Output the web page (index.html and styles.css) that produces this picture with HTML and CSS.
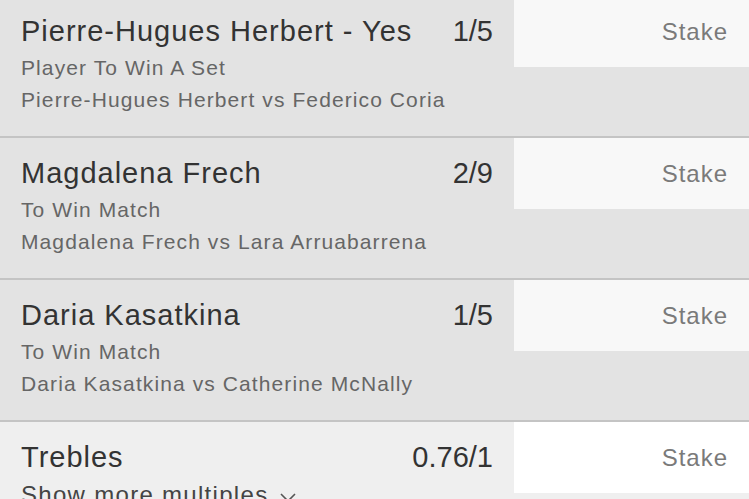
FILE: index.html
```html
<!DOCTYPE html>
<html lang="en">
<head>
  <meta charset="UTF-8">
  <meta name="viewport" content="width=device-width, initial-scale=1.0">
  <title>Bet Slip</title>
  <link rel="stylesheet" href="styles.css">
</head>
<body>
  <div class="slip">
    <div class="bet">
      <div class="bet-info">
        <div class="bet-head">
          <span class="bet-name">Pierre-Hugues Herbert - Yes</span>
          <span class="bet-odds">1/5</span>
        </div>
        <div class="bet-market">Player To Win A Set</div>
        <div class="bet-event">Pierre-Hugues Herbert vs Federico Coria</div>
      </div>
      <div class="stake">Stake</div>
    </div>

    <div class="bet">
      <div class="bet-info">
        <div class="bet-head">
          <span class="bet-name">Magdalena Frech</span>
          <span class="bet-odds">2/9</span>
        </div>
        <div class="bet-market">To Win Match</div>
        <div class="bet-event">Magdalena Frech vs Lara Arruabarrena</div>
      </div>
      <div class="stake">Stake</div>
    </div>

    <div class="bet">
      <div class="bet-info">
        <div class="bet-head">
          <span class="bet-name">Daria Kasatkina</span>
          <span class="bet-odds">1/5</span>
        </div>
        <div class="bet-market">To Win Match</div>
        <div class="bet-event">Daria Kasatkina vs Catherine McNally</div>
      </div>
      <div class="stake">Stake</div>
    </div>

    <div class="bet multiple">
      <div class="bet-info">
        <div class="bet-head">
          <span class="bet-name">Trebles</span>
          <span class="bet-odds">0.76/1</span>
        </div>
        <div class="more">
          Show more multiples
          <svg class="chevron" width="20" height="12" viewBox="0 0 20 12">
            <path d="M3 3 L10 10 L17 3" fill="none" stroke="#555" stroke-width="1.6"/>
          </svg>
        </div>
      </div>
      <div class="stake">Stake</div>
    </div>
  </div>
</body>
</html>
```

FILE: styles.css
```css
body {
  margin: 0;
  overflow: hidden;
  font-family: "Liberation Sans", Arial, sans-serif;
  background: #efefef;
}
.slip {
  margin-top: -6px;
}
.bet {
  display: flex;
  align-items: flex-start;
  height: 140px;
  border-top: 2px solid #c4c4c4;
  background: #e3e3e3;
}
.bet-info {
  flex: 1;
  padding: 17px 21px 0 21px;
}
.bet-head {
  display: flex;
  justify-content: space-between;
  font-size: 29px;
  line-height: 36px;
  color: #333;
}
.bet-name {
  letter-spacing: 1px;
}
.bet-market, .bet-event {
  font-size: 21px;
  line-height: 32px;
  letter-spacing: 1.1px;
  color: #666;
}
.bet-market {
  margin-top: 3px;
}
.stake {
  width: 214px;
  height: 71px;
  padding-right: 21px;
  background: #f8f8f8;
  text-align: right;
  font-size: 24px;
  line-height: 71px;
  letter-spacing: 1px;
  color: #7a7a7a;
}
.multiple {
  background: #efefef;
}
.multiple .stake {
  background: #fff;
}
.more {
  margin-top: 4px;
  font-size: 24px;
  line-height: 32px;
  letter-spacing: 1.3px;
  color: #444;
}
.chevron {
  vertical-align: middle;
  margin-left: 2px;
}
```
